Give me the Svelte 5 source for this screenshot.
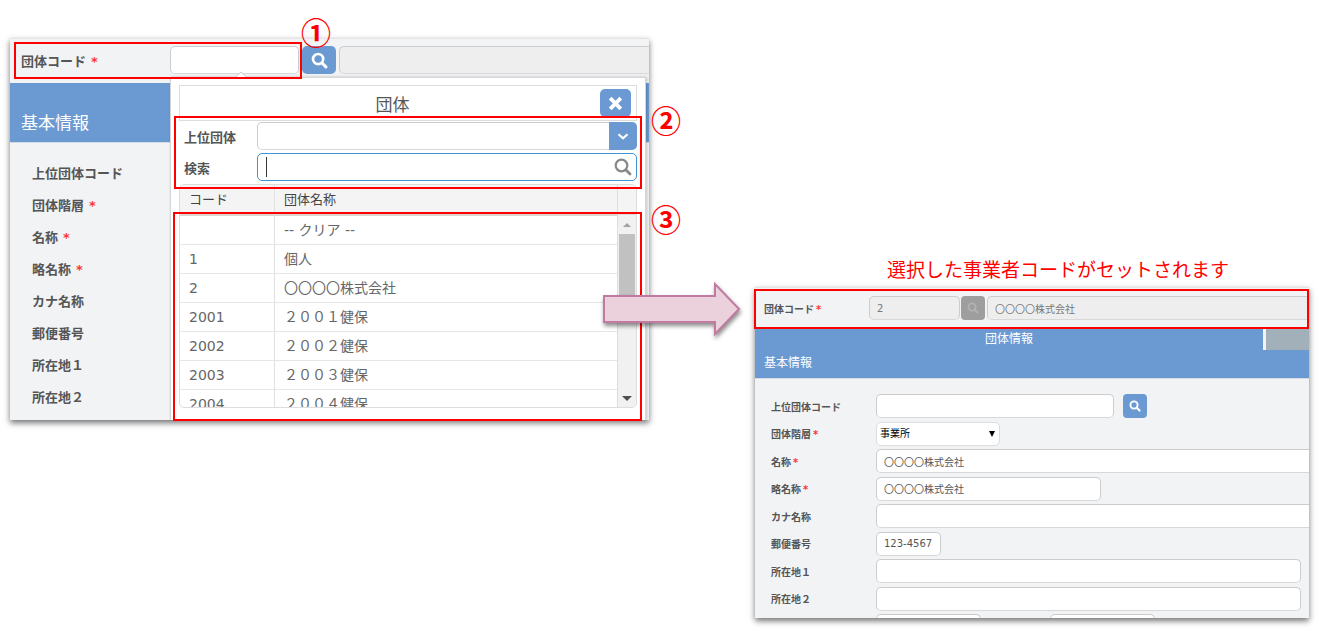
<script>
  let code = $state('');
  let parent = $state('');
  let keyword = $state('');
  let level = $state('事業所');

  const labels = [
    { text: '上位団体コード' },
    { text: '団体階層', required: true },
    { text: '名称', required: true },
    { text: '略名称', required: true },
    { text: 'カナ名称' },
    { text: '郵便番号' },
    { text: '所在地１' },
    { text: '所在地２' },
  ];

  const groups = [
    { code: '', name: '-- クリア --' },
    { code: '1', name: '個人' },
    { code: '2', name: '〇〇〇〇株式会社' },
    { code: '2001', name: '２００１健保' },
    { code: '2002', name: '２００２健保' },
    { code: '2003', name: '２００３健保' },
    { code: '2004', name: '２００４健保' },
  ];
</script>

{#snippet searchIcon()}
  <svg viewBox="0 0 18 18" aria-hidden="true">
    <circle cx="7.5" cy="7.5" r="5.4" fill="none" stroke="currentColor" stroke-width="2.8" />
    <path d="M11.6 11.6 L15.8 15.8" stroke="currentColor" stroke-width="3.2" stroke-linecap="round" />
  </svg>
{/snippet}

{#snippet star(required)}
  {#if required}<span class="star">*</span>{/if}
{/snippet}

<main>
  <section class="before">
    <div class="panel">
      <div class="head">
        <label for="code">団体コード<span class="star">*</span></label>
        <input id="code" class="code" type="text" bind:value={code} />
        <button type="button" class="icon-button" aria-label="検索">{@render searchIcon()}</button>
        <input class="code-name" type="text" aria-label="団体名称" disabled />
      </div>
      <h2>基本情報</h2>
      <ul class="labels">
        {#each labels as label}
          <li>{label.text}{@render star(label.required)}</li>
        {/each}
      </ul>

      <div class="popup">
        <svg class="caret" viewBox="0 0 12 7" aria-hidden="true">
          <path d="M0 6.5 L6 1 L12 6.5" fill="#fff" stroke="#c8cacc" />
        </svg>
        <div class="popup-title">
          <h3>団体</h3>
          <button type="button" class="icon-button close" aria-label="閉じる">
            <svg viewBox="0 0 16 16" aria-hidden="true">
              <path d="M3 3 L13 13 M13 3 L3 13" stroke="currentColor" stroke-width="3.6" />
            </svg>
          </button>
        </div>
        <div class="filter">
          <label for="parent">上位団体</label>
          <div class="field">
            <select id="parent" bind:value={parent}>
              <option value=""></option>
            </select>
            <span class="drop">
              <svg viewBox="0 0 12 8" aria-hidden="true">
                <path d="M2 2 L6 5.6 L10 2" fill="none" stroke="currentColor" stroke-width="1.9" />
              </svg>
            </span>
          </div>
        </div>
        <div class="filter">
          <label for="keyword">検索</label>
          <div class="field">
            <input id="keyword" type="text" bind:value={keyword} />
            <span class="cursor"></span>
            <span class="glass">
              <svg viewBox="0 0 18 18" aria-hidden="true">
                <circle cx="7.5" cy="7.5" r="5.8" fill="none" stroke="currentColor" stroke-width="2.2" />
                <path d="M12 12 L16 16" stroke="currentColor" stroke-width="2.8" stroke-linecap="round" />
              </svg>
            </span>
          </div>
        </div>
        <div class="list">
          <div class="rows">
            <table>
              <thead>
                <tr><th>コード</th><th>団体名称</th></tr>
              </thead>
              <tbody>
                {#each groups as group}
                  <tr><td>{group.code}</td><td>{group.name}</td></tr>
                {/each}
              </tbody>
            </table>
          </div>
          <div class="scroll">
            <div class="corner"></div>
            <svg viewBox="0 0 10 6" aria-hidden="true"><path d="M1 5 L5 1 L9 5 Z" fill="#a3a3a3" /></svg>
            <div class="thumb"></div>
            <svg class="down" viewBox="0 0 10 6" aria-hidden="true"><path d="M0 0 L5 5 L10 0 Z" fill="#505050" /></svg>
          </div>
        </div>
      </div>
    </div>

    <div class="mark mark-code"></div>
    <div class="mark mark-filter"></div>
    <div class="mark mark-list"></div>
    <span class="number one">①</span>
    <span class="number two">②</span>
    <span class="number three">③</span>
  </section>

  <div class="between">
    <svg class="arrow" viewBox="0 0 138 54" aria-hidden="true">
      <path d="M1 14 H112 V2 L136 27 L112 52 V40 H1 Z" fill="#ead1dc" stroke="#c27ba0" stroke-width="2" />
    </svg>
  </div>

  <section class="after">
    <p class="caption">選択した事業者コードがセットされます</p>
    <div class="result">
      <div class="panel small">
        <div class="head">
          <label for="set-code">団体コード<span class="star">*</span></label>
          <input id="set-code" class="code" type="text" value="2" disabled />
          <button type="button" class="icon-button" aria-label="検索" disabled>{@render searchIcon()}</button>
          <input class="code-name" type="text" aria-label="団体名称" value="〇〇〇〇株式会社" disabled />
        </div>
        <div class="tabs">
          <button type="button" class="tab active">団体情報</button>
          <button type="button" class="tab" aria-label="次のタブ"></button>
        </div>
        <h2>基本情報</h2>
        <form>
          <label for="f-parent">上位団体コード</label>
          <div class="cell">
            <input id="f-parent" class="w-parent" type="text" />
            <button type="button" class="icon-button" aria-label="上位団体検索">{@render searchIcon()}</button>
          </div>
          <label for="f-level">団体階層<span class="star">*</span></label>
          <div class="cell">
            <div class="level">
              <select id="f-level" bind:value={level}>
                <option>事業所</option>
              </select>
              <svg viewBox="0 0 6 6" aria-hidden="true"><path d="M0 0 H6 L3 6 Z" fill="#000" /></svg>
            </div>
          </div>
          <label for="f-name">名称<span class="star">*</span></label>
          <div class="cell"><input id="f-name" class="w-over" type="text" value="〇〇〇〇株式会社" /></div>
          <label for="f-short">略名称<span class="star">*</span></label>
          <div class="cell"><input id="f-short" class="w-short" type="text" value="〇〇〇〇株式会社" /></div>
          <label for="f-kana">カナ名称</label>
          <div class="cell"><input id="f-kana" class="w-over" type="text" /></div>
          <label for="f-zip">郵便番号</label>
          <div class="cell"><input id="f-zip" class="w-zip" type="text" value="123-4567" /></div>
          <label for="f-addr1">所在地１</label>
          <div class="cell"><input id="f-addr1" class="w-full" type="text" /></div>
          <label for="f-addr2">所在地２</label>
          <div class="cell"><input id="f-addr2" class="w-full" type="text" /></div>
          <span></span>
          <div class="cell phones">
            <input class="w-phone" type="text" aria-label="電話番号" />
            <input class="w-phone" type="text" aria-label="FAX番号" />
          </div>
        </form>
      </div>
      <div class="mark mark-result"></div>
    </div>
  </section>
</main>

<style>
  :global(body) {
    margin: 0;
    background: #fff;
    color: #555;
    font-family: 'DejaVu Sans', 'Noto Sans CJK JP', sans-serif;
  }

  * {
    box-sizing: border-box;
  }

  main {
    display: flex;
    align-items: flex-start;
    padding: 38px 10px 10px;
  }

  h2,
  h3,
  p,
  ul {
    margin: 0;
    padding: 0;
    font-weight: 400;
  }

  input,
  select,
  button {
    font-family: inherit;
    color: inherit;
  }

  input,
  select {
    height: 28px;
    min-width: 0;
    padding: 0 8px;
    border: 1px solid #ccc;
    border-bottom-color: #d8d8d8;
    border-radius: 5px;
    background: #fff;
    font-size: 14px;
    outline: none;
  }

  input:disabled {
    background: #eee;
    color: #777;
  }

  select {
    appearance: none;
  }

  svg {
    display: block;
  }

  .star {
    color: #f33;
    margin-left: 5px;
    font-family: 'DejaVu Sans', sans-serif;
  }

  .icon-button {
    display: flex;
    flex: none;
    align-items: center;
    justify-content: center;
    width: 34px;
    height: 28px;
    padding: 0;
    border: none;
    border-radius: 5px;
    background: #6b9ad3;
    color: #fff;
    cursor: pointer;
  }

  .icon-button svg {
    width: 17px;
    height: 17px;
  }

  .icon-button:disabled {
    background: #9e9e9e;
    color: #b2b2b2;
  }

  .panel {
    position: relative;
    overflow: hidden;
    background: #f2f3f5;
  }

  .before {
    position: relative;
    flex: 639 1 0;
    min-width: 0;
  }

  .before > .panel,
  .result {
    box-shadow: 0 3px 6px rgba(0, 0, 0, 0.55);
  }

  .head {
    display: flex;
    align-items: center;
    padding: 7px 0 9px 11px;
    border-top: 1px solid #e2e4e6;
  }

  .head label {
    flex: none;
    width: 149px;
    font-size: 13px;
    font-weight: bold;
  }

  .head .code {
    flex: none;
    width: 129px;
    margin-right: 3px;
  }

  .head .code-name {
    flex: 1;
    margin-left: 3px;
    border-right: none;
    border-radius: 5px 0 0 5px;
  }

  .panel h2 {
    padding: 28px 11px 6px;
    border-bottom: 1px solid #d5dbe2;
    background: #6b9ad3;
    color: #fff;
    font-size: 17px;
    line-height: 25px;
  }

  .labels {
    padding: 15px 22px 6px;
    list-style: none;
    font-size: 13px;
    font-weight: bold;
    line-height: 32px;
  }

  .popup {
    position: absolute;
    top: 39px;
    right: 3px;
    bottom: 0;
    left: 160px;
    display: flex;
    flex-direction: column;
    padding: 7px 8px 12px;
    border: 1px solid #d4d6d8;
    border-bottom: none;
    background: #fff;
    box-shadow: 1px 0 3px rgba(0, 0, 0, 0.2);
  }

  .caret {
    position: absolute;
    top: -7px;
    left: 64px;
    width: 12px;
    height: 7px;
  }

  .popup-title {
    display: flex;
    align-items: center;
    padding: 3px 5px 3px;
    border: 1px solid #ddd;
    margin-bottom: 1px;
  }

  .popup-title h3 {
    flex: 1;
    padding-top: 4px;
    text-align: center;
    font-size: 17px;
    line-height: 24px;
  }

  .close {
    width: 31px;
  }

  .filter {
    display: flex;
    align-items: center;
    margin-bottom: 3px;
  }

  .filter label {
    flex: none;
    width: 78px;
    padding-left: 5px;
    font-size: 13px;
    font-weight: bold;
  }

  .field {
    position: relative;
    flex: 1;
  }

  .field select,
  .field input {
    display: block;
    width: 100%;
  }

  .field input {
    border-color: #3d94d6;
  }

  .drop,
  .glass {
    position: absolute;
    top: 0;
    right: 0;
    display: flex;
    align-items: center;
    justify-content: center;
    width: 28px;
    height: 28px;
    pointer-events: none;
  }

  .drop {
    border-radius: 0 5px 5px 0;
    background: #6b9ad3;
    color: #fff;
  }

  .drop svg {
    width: 14px;
    height: 9px;
  }

  .glass {
    color: #888;
  }

  .glass svg {
    width: 18px;
    height: 18px;
  }

  .cursor {
    position: absolute;
    top: 4px;
    left: 9px;
    width: 1px;
    height: 20px;
    background: #333;
  }

  .list {
    display: flex;
    flex: 1;
    min-height: 0;
    overflow: hidden;
    border: 1px solid #ddd;
    border-radius: 5px;
  }

  .rows {
    flex: 1;
    overflow: hidden;
  }

  table {
    width: 100%;
    border-collapse: separate;
    border-spacing: 0;
    table-layout: fixed;
  }

  th,
  td {
    height: 29px;
    padding: 0 9px;
    border-bottom: 1px solid #e6e6e6;
    text-align: left;
    font-size: 14px;
    line-height: 20px;
    color: #666;
  }

  th {
    height: 31px;
    border-bottom: 2px solid #ddd8cf;
    background: #f4f4f4;
    font-size: 13px;
    font-weight: 400;
    color: #444;
  }

  th:first-child,
  td:first-child {
    width: 95px;
    border-right: 1px solid #e0e0e0;
  }

  .scroll {
    display: flex;
    flex: none;
    flex-direction: column;
    align-items: center;
    width: 19px;
    border-left: 1px solid #ddd;
    background: #f1f1f1;
  }

  .scroll svg {
    flex: none;
    width: 10px;
    height: 6px;
  }

  .corner {
    flex: none;
    width: 100%;
    height: 30px;
    margin-bottom: 7px;
    border-bottom: 1px solid #ddd;
    background: #f4f4f4;
  }

  .thumb {
    width: 16px;
    height: 80px;
    margin-top: 6px;
    background: #c1c1c1;
  }

  .scroll .down {
    margin: auto 0 5px;
  }

  /* red annotations */
  .mark {
    position: absolute;
    border: 2px solid #f00;
    pointer-events: none;
  }

  .mark-code {
    top: 4px;
    left: 4px;
    width: 288px;
    height: 37px;
  }

  .mark-filter {
    top: 78px;
    right: 7px;
    left: 164px;
    height: 73px;
  }

  .mark-list {
    top: 174px;
    right: 7px;
    bottom: -1px;
    left: 163px;
  }

  .mark-result {
    top: 2px;
    right: 0;
    left: -1px;
    height: 40px;
  }

  .number {
    position: absolute;
    color: #f00;
    font-family: 'Noto Sans CJK JP', sans-serif;
    font-size: 30px;
    font-weight: bold;
    line-height: 32px;
  }

  .one {
    top: -23px;
    left: 291px;
  }

  .two {
    top: 65px;
    left: calc(100% + 2px);
  }

  .three {
    top: 164px;
    left: calc(100% + 2px);
  }

  .between {
    position: relative;
    flex: none;
    width: 106px;
  }

  .arrow {
    position: absolute;
    top: 244px;
    left: -46px;
    width: 138px;
    height: 54px;
    filter: drop-shadow(1px 3px 2px rgba(0, 0, 0, 0.45));
  }

  .after {
    flex: 554 1 0;
    min-width: 0;
    padding-top: 220px;
  }

  .caption {
    margin-bottom: 5px;
    padding-left: 132px;
    color: #f00;
    font-size: 19px;
    line-height: 24px;
    white-space: nowrap;
  }

  .result {
    position: relative;
  }

  .small input,
  .small select {
    height: 24px;
    padding: 0 7px;
    font-size: 10px;
  }

  .small label {
    font-size: 10px;
    font-weight: bold;
  }

  .small .star {
    margin-left: 2px;
  }

  .small .icon-button {
    width: 24px;
    height: 24px;
    border-radius: 4px;
  }

  .small .icon-button svg {
    width: 12px;
    height: 12px;
  }

  .small .head {
    padding: 8px 0 8px 9px;
  }

  .small .head label {
    width: 105px;
  }

  .small .head .code {
    width: 91px;
    margin-right: 1px;
  }

  .small .head .code-name {
    margin-left: 2px;
  }

  .tabs {
    display: flex;
    gap: 3px;
  }

  .tab {
    width: 43px;
    height: 22px;
    padding: 0 0 4px;
    border: none;
    background: #a2b1b9;
    color: #fff;
    font-size: 12px;
  }

  .tab.active {
    flex: 1;
    background: #6b9ad3;
  }

  .small h2 {
    padding: 3px 9px 5px;
    font-size: 12px;
    line-height: 20px;
  }

  form {
    display: grid;
    grid-template-columns: 105px 1fr;
    grid-auto-rows: 28px 27px;
    align-items: center;
    padding: 13px 8px 0 16px;
    margin-bottom: -22px;
  }

  .cell {
    display: flex;
    gap: 9px;
    min-width: 0;
  }

  .phones {
    gap: 69px;
  }

  .level {
    position: relative;
  }

  .level select {
    display: block;
    width: 124px;
    padding: 0 3px;
    border-color: #ddd;
    color: #000;
  }

  .level svg {
    position: absolute;
    top: 9px;
    right: 5px;
    width: 6px;
    height: 6px;
  }

  .w-parent {
    width: 238px;
  }

  .w-short {
    width: 225px;
  }

  .w-zip {
    width: 65px;
  }

  .w-phone {
    width: 105px;
  }

  .w-full {
    width: 100%;
  }

  .w-over {
    flex: 1;
    margin-right: -16px;
  }
</style>
